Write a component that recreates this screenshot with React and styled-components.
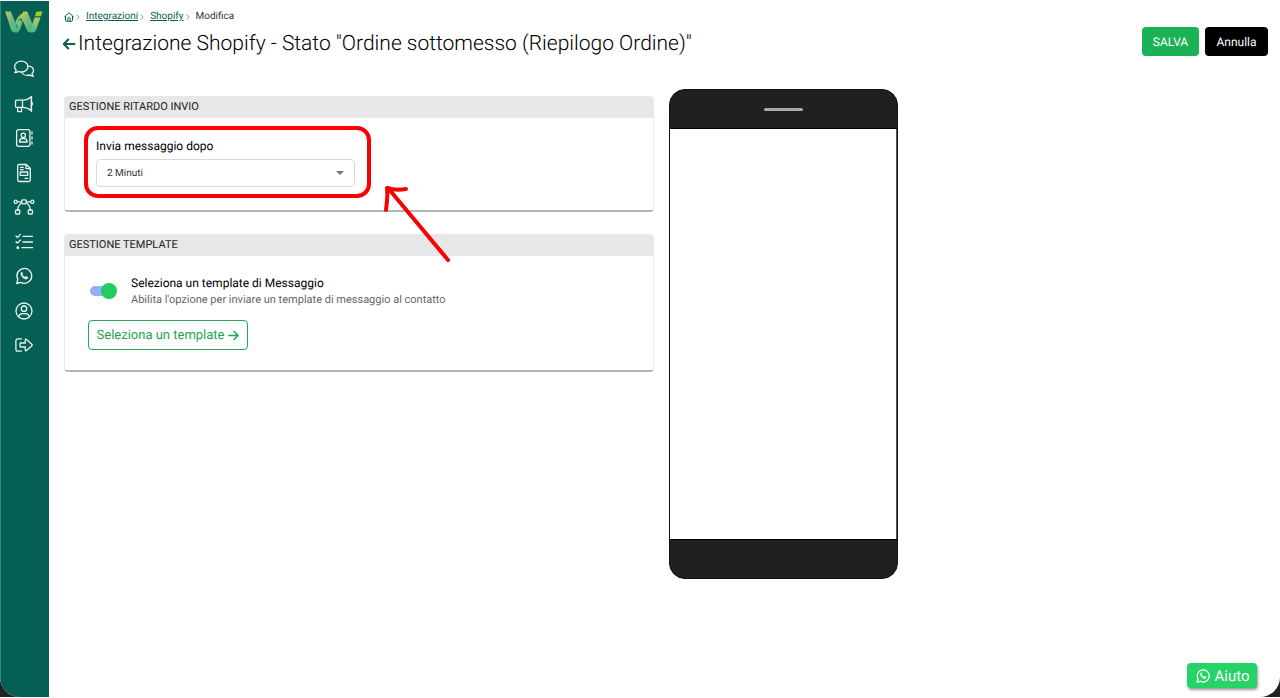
import React, { useState } from "react";
import styled, { createGlobalStyle } from "styled-components";

const GlobalStyle = createGlobalStyle`
  *, *::before, *::after { box-sizing: border-box; }
  body { margin: 0; background: #fff; font-family: Roboto, "Liberation Sans", sans-serif; font-size: 12px; color: #111; text-rendering: geometricPrecision; }
  button, select, input { font-family: inherit; margin: 0; text-rendering: inherit; }
  h1, h2, p, ol { margin: 0; padding: 0; font-weight: 400; }
`;

const Desktop = styled.div`
  padding: 1px 0;
  min-height: 100vh;
  display: flex;
`;
const Backdrop = styled.div`
  flex: 1;
  display: flex;
  background: #1f2423;
`;
const AppWindow = styled.div`
  flex: 1;
  display: flex;
  background: #fff;
  border-radius: 0 0 20px 20px;
  overflow: hidden;
`;
const Sidebar = styled.aside`
  flex: none;
  width: 49px;
  background: #065f53;
  box-shadow: inset 1px 0 #3d857b;
  display: flex;
  flex-direction: column;
  align-items: center;
  padding: 9px 1px 0 0;
`;
const LogoLink = styled.a`
  display: block;
  height: 26px;
`;
const Nav = styled.nav`
  margin-top: 22px;
  height: 298px;
  display: flex;
  flex-direction: column;
  justify-content: space-between;
`;
const NavLink = styled.a`
  display: block;
  height: 22px;
  color: #e9f4f1;
`;
const Main = styled.main`
  flex: 1;
  min-width: 0;
  padding: 9px 12px 9px 15px;
  display: flex;
  flex-direction: column;
`;
const Crumbs = styled.ol`
  display: flex;
  align-items: center;
  height: 14px;
  list-style: none;
  font-size: 10px;
  line-height: 14px;
`;
const Crumb = styled.li`
  display: flex;
  align-items: center;
  color: #333;
`;
const CrumbLink = styled.a`
  display: flex;
  color: #065f53;
  text-decoration: underline;
  text-underline-offset: 1px;
`;
const Separator = styled.svg`
  margin: 0 6px 0 2px;
`;
const Header = styled.header`
  display: flex;
  justify-content: space-between;
  align-items: flex-start;
  height: 34px;
  margin-top: 3px;
`;
const TitleGroup = styled.div`
  display: flex;
  align-items: center;
  gap: 2px;
  margin-left: -2px;
  height: 34px;
`;
const BackLink = styled.a`
  display: flex;
  color: #065f53;
`;
const Title = styled.h1`
  font-size: 21px;
  font-weight: 300;
  line-height: 30px;
  color: #000;
`;
const Actions = styled.div`
  display: flex;
  gap: 6px;
`;
const Button = styled.button`
  height: 29px;
  width: ${(p) => p.$width}px;
  border: 0;
  border-radius: 4px;
  background: ${(p) => p.$color};
  color: #fff;
  font-size: 12px;
  padding: 0;
`;
const Columns = styled.div`
  display: flex;
  align-items: flex-start;
  gap: 15px;
  margin-top: 28px;
  flex: 1;
`;
const Cards = styled.div`
  width: 49%;
  padding-top: 7px;
  display: flex;
  flex-direction: column;
  gap: 22px;
`;
const Card = styled.section`
  border-radius: 4px;
  background: #fff;
  border: 1px solid #e9e9e9;
  border-top: 0;
  border-bottom: 2px solid #b5b5b5;
`;
const CardTitle = styled.h2`
  background: #e7e7e7;
  border-radius: 4px 4px 0 0;
  padding: 0 4px;
  height: 22px;
  font-size: 11px;
  line-height: 22px;
  color: #222;
`;
const DelayBody = styled.div`
  padding: 19px 31px 23px;
`;
const Field = styled.div`
  position: relative;
  width: 259px;
  display: flex;
  flex-direction: column;
  gap: 4px;
`;
const FieldLabel = styled.label`
  font-size: 12px;
  line-height: 18px;
  color: #000;
`;
const SelectWrap = styled.div`
  display: grid;
  align-items: center;
  > * { grid-area: 1 / 1; }
`;
const Select = styled.select`
  appearance: none;
  width: 100%;
  height: 28px;
  border: 1px solid #d9d9d9;
  border-radius: 4px;
  background: #fff;
  padding: 0 10px;
  font-size: 10px;
  color: #333;
`;
const Caret = styled.svg`
  justify-self: end;
  margin-right: 11px;
  pointer-events: none;
`;
const Highlight = styled.div`
  position: absolute;
  left: -12px;
  top: -11px;
  width: 287px;
  height: 72px;
  border: 4px solid #f90004;
  border-radius: 14px;
  pointer-events: none;
`;
const Arrow = styled.svg`
  position: absolute;
  left: 286px;
  top: 46px;
  pointer-events: none;
`;
const TemplateBody = styled.div`
  padding: 18px 23px 20px;
`;
const SwitchRow = styled.div`
  display: flex;
  align-items: center;
  gap: 14px;
  padding-left: 1px;
`;
const Switch = styled.input.attrs({ type: "checkbox" })`
  appearance: none;
  width: 28px;
  height: 16px;
  display: grid;
  align-items: center;
  cursor: pointer;
  &::before {
    content: "";
    grid-area: 1 / 1;
    height: 10px;
    width: 26px;
    margin-left: 1px;
    border-radius: 5px;
    background: ${(p) => (p.checked ? "#93b0f8" : "#bbb")};
  }
  &::after {
    content: "";
    grid-area: 1 / 1;
    justify-self: ${(p) => (p.checked ? "end" : "start")};
    width: 16px;
    height: 16px;
    border-radius: 50%;
    background: ${(p) => (p.checked ? "#22cc60" : "#f4f4f4")};
  }
`;
const SwitchLabel = styled.label`
  font-size: 12px;
  line-height: 18px;
  color: #000;
`;
const Hint = styled.p`
  font-size: 11px;
  line-height: 16px;
  color: #666;
`;
const OutlineButton = styled.button`
  display: flex;
  align-items: center;
  justify-content: center;
  gap: 4px;
  margin-top: 12px;
  width: 160px;
  height: 30px;
  padding: 0;
  border: 1px solid #27a75b;
  border-radius: 4px;
  background: #fff;
  color: #1fa552;
  font-size: 13px;
`;
const Phone = styled.div`
  width: 229px;
  height: 490px;
  flex: none;
  display: flex;
  flex-direction: column;
  border: 1px solid #111;
  border-radius: 16px;
  background: #202020;
  overflow: hidden;
`;
const PhoneTop = styled.div`
  height: 39px;
  display: flex;
  align-items: center;
  justify-content: center;
  border-bottom: 1px solid #000;
`;
const Speaker = styled.span`
  width: 39px;
  height: 3px;
  border-radius: 2px;
  background: #aaa;
`;
const PhoneScreen = styled.div`
  flex: 1;
  background: #fff;
  border: solid #555;
  border-width: 0 1px 0 0;
`;
const PhoneBottom = styled.div`
  height: 39px;
  border-top: 1px solid #000;
`;
const HelpButton = styled.button`
  align-self: flex-end;
  margin-right: 11px;
  width: 70px;
  height: 25px;
  padding: 0;
  display: flex;
  align-items: center;
  justify-content: center;
  gap: 2px;
  border: 0;
  border-radius: 4px;
  background: #25d366;
  color: #fff;
  font-size: 15px;
  box-shadow: 1px 2px 3px rgba(0, 0, 0, 0.4);
`;

const Glyph = ({ size = 22, width = 1.3, children }) => (
  <svg width={size} height={size} viewBox="0 0 22 22" fill="none" stroke="currentColor"
    strokeWidth={width} strokeLinecap="round" strokeLinejoin="round" aria-hidden="true">
    {children}
  </svg>
);

const WhatsappShape = () => (
  <>
    <path d="M3.700 18.500l1.100-4.100A7.400 7.400 0 1 1 7.800 17.400z" />
    <path d="M8.500 7.300c-1.400 1-.7 3.100 1 4.900 1.800 1.800 4 2.600 5 1.200.5-.8.4-1.100.1-1.300l-1.600-.8c-.4-.1-.6.5-1 .9-1.300-.5-2.200-1.400-2.800-2.500.3-.4.7-.7.5-1.100l-.6-1.200c-.1-.2-.4-.2-.6-.1z" fill="currentColor" strokeWidth="0.5" />
  </>
);

const navItems = [
  { label: "Chat", icon: (
    <>
      <path d="M8.300 3.200c-3.700 0-6.700 2.400-6.700 5.400 0 1.400.6 2.600 1.600 3.500-.2 1-.7 1.800-1.400 2.600 1.400 0 2.600-.5 3.500-1.300 1 .4 2 .6 3 .6 3.700 0 6.700-2.400 6.700-5.400s-3-5.400-6.700-5.400z" />
      <path d="M15.300 8.100c3 .2 5.200 2 5.200 4.400 0 1.200-.6 2.300-1.500 3.100.2 1 .7 1.800 1.400 2.700-1.400 0-2.600-.5-3.600-1.300-3.300.9-6.700-.2-7.900-2.800" />
    </>
  ) },
  { label: "Campagne", icon: (
    <>
      <path d="M3.700 7.200H10c3.200 0 6-1.300 8.300-3.400v14c-2.300-2.100-5.100-3.400-8.300-3.400H3.700a1.200 1.200 0 0 1-1.200-1.200V8.400a1.200 1.200 0 0 1 1.200-1.200z" />
      <path d="M9.500 7.400v6.800M18.500 9.300c1.300.5 1.300 2.600 0 3.100M4.700 14.600v4h3.800v-4M18.500 3.300v15" />
    </>
  ) },
  { label: "Contatti", icon: (
    <>
      <rect x="3.600" y="2.700" width="13.300" height="16.600" rx="2" />
      <circle cx="10.300" cy="8.300" r="2.200" />
      <path d="M6.500 15c0-2.200 1-3.300 2.400-3.300h2.800c1.400 0 2.400 1.100 2.400 3.300zM19 5v2M19 10v2M19 15v2" />
    </>
  ) },
  { label: "Template", icon: (
    <>
      <path d="M5.900 2.500h7.400l4 4v11.300a1.700 1.700 0 0 1-1.700 1.700H6.400a1.700 1.700 0 0 1-1.700-1.700V3.700a1.200 1.200 0 0 1 1.200-1.200zM13 2.700v4h4" />
      <rect x="7.300" y="10" width="7.400" height="3.300" />
      <path d="M7.500 5.400h2.700M7.500 7.600h2.700M12 16.300h2.700" />
    </>
  ) },
  { label: "Automazioni", icon: (
    <>
      <rect x="8.700" y="3.800" width="4.600" height="4" rx="1" />
      <circle cx="2.700" cy="5.800" r="1.600" />
      <circle cx="19.300" cy="5.800" r="1.600" />
      <rect x="2.500" y="14" width="4.300" height="4" rx="1" />
      <rect x="15.200" y="14" width="4.300" height="4" rx="1" />
      <path d="M4.400 5.800h4.300M13.300 5.800h4.300M8.700 7C6.400 8.300 5 10.700 4.700 14M13.300 7c2.300 1.300 3.700 3.700 4 7" />
    </>
  ) },
  { label: "Attività", icon: (
    <>
      <path d="M3 5.100l1.500 1.400 3-3.100M3 10.700l1.500 1.400 3-3.100M10 5.300h9.500M10 11h9.500M9 16.700h10.500" />
      <circle cx="4.800" cy="16.700" r=".8" fill="currentColor" />
    </>
  ) },
  { label: "WhatsApp", icon: <WhatsappShape /> },
  { label: "Profilo", icon: (
    <>
      <circle cx="11" cy="11" r="8" />
      <circle cx="11" cy="8.700" r="2.700" />
      <path d="M5.700 16.700c.5-2 1.700-3.100 3.300-3.100.7 0 1.100.3 2 .3s1.300-.3 2-.3c1.600 0 2.800 1.100 3.300 3.100" />
    </>
  ) },
  { label: "Esci", icon: (
    <>
      <path d="M8.500 4.900H4.800A1.900 1.900 0 0 0 2.900 6.800v8.400a1.900 1.900 0 0 0 1.900 1.900h3.700" />
      <path d="M7.700 9h4.600V5.700c0-.5.5-.7.9-.4l5.900 5.300c.2.200.2.600 0 .8l-5.900 5.300c-.4.300-.9.100-.9-.4V13H7.700c-.4 0-.7-.3-.7-.7V9.700c0-.4.300-.7.700-.7z" />
    </>
  ) },
];

const Logo = () => (
  <svg width="38" height="26" viewBox="0 0 38 26" role="img" aria-label="W">
    <defs>
      <linearGradient id="leaf" x1="0" y1="0" x2="1" y2="1">
        <stop offset="0" stopColor="#c3ca5b" />
        <stop offset="0.500" stopColor="#70b77c" />
        <stop offset="1" stopColor="#3ab795" />
      </linearGradient>
      <linearGradient id="stem" x1="0" y1="0" x2="0" y2="1">
        <stop offset="0" stopColor="#c0ca58" />
        <stop offset="1" stopColor="#3cba94" />
      </linearGradient>
    </defs>
    <path d="M.2 1.500h5.600l5.600 13.500 1 7.500h-2C7.500 22.500 6.500 21 5.800 19z" fill="url(#leaf)" />
    <path d="M11.500 22.500l1-6.500-2.300-3c1.300-5 5-9 9.800-11l-2.200 9.500-2.700 7.500c-.8 2.300-1.800 3.500-3.600 3.500z" fill="url(#stem)" />
    <path d="M18 1.500h4.300l5.500 13-2.300 8c-2 0-3.200-1.200-4-3.500l-3.400-7.500z" fill="url(#leaf)" />
    <path d="M25 22.500l1.700-6.500 2.800-8.500h6l-4 11.500c-.9 2.400-2 3.500-4.200 3.500z" fill="url(#stem)" />
    <path d="M31.500 1.500h6l-1.700 4.800h-6z" fill="#a4ce21" />
    <path d="M13 10.500l3.200-1.700 1 3.700" fill="none" stroke="#0b6557" />
  </svg>
);

const Chevron = () => (
  <Separator width="4" height="8" viewBox="0 0 4 8" fill="none" stroke="#999" aria-hidden="true">
    <path d="M.7 1.500L3.200 4 .7 6.500" />
  </Separator>
);

export default function App() {
  const [delay, setDelay] = useState("2");
  const [enabled, setEnabled] = useState(true);
  return (
    <>
      <GlobalStyle />
      <Desktop>
        <Backdrop>
          <AppWindow>
            <Sidebar>
              <LogoLink href="#home" aria-label="Home"><Logo /></LogoLink>
              <Nav>
                {navItems.map((item) => (
                  <NavLink key={item.label} href="#menu" aria-label={item.label}>
                    <Glyph>{item.icon}</Glyph>
                  </NavLink>
                ))}
              </Nav>
            </Sidebar>
            <Main>
              <Crumbs>
                <Crumb>
                  <CrumbLink href="#home" aria-label="Home">
                    <svg width="10" height="10" viewBox="0 0 10 10" fill="none" stroke="currentColor" strokeLinejoin="round" aria-hidden="true">
                      <path d="M.4 4.900L5 .8l4.600 4.100M1.500 4v4.300c0 .6.4 1 1 1h5c.6 0 1-.4 1-1V4M3.800 9.200V6.400c0-.4.2-.6.600-.6h1.200c.4 0 .6.2.6.6v2.800" />
                    </svg>
                  </CrumbLink>
                  <Chevron />
                </Crumb>
                <Crumb><CrumbLink href="#integrazioni">Integrazioni</CrumbLink><Chevron /></Crumb>
                <Crumb><CrumbLink href="#shopify">Shopify</CrumbLink><Chevron /></Crumb>
                <Crumb aria-current="page">Modifica</Crumb>
              </Crumbs>
              <Header>
                <TitleGroup>
                  <BackLink href="#indietro" aria-label="Indietro">
                    <svg width="14" height="14" viewBox="0 0 14 14" fill="none" stroke="currentColor" strokeWidth="2" strokeLinecap="round" strokeLinejoin="round" aria-hidden="true">
                      <path d="M6.300 2.500L1.800 7l4.500 4.500M2 7h10.500" />
                    </svg>
                  </BackLink>
                  <Title>Integrazione Shopify - Stato "Ordine sottomesso (Riepilogo Ordine)"</Title>
                </TitleGroup>
                <Actions>
                  <Button type="button" $color="#1bb255" $width={57}>SALVA</Button>
                  <Button type="button" $color="#000" $width={63}>Annulla</Button>
                </Actions>
              </Header>
              <Columns>
                <Cards>
                  <Card>
                    <CardTitle>GESTIONE RITARDO INVIO</CardTitle>
                    <DelayBody>
                      <Field>
                        <FieldLabel htmlFor="delay">Invia messaggio dopo</FieldLabel>
                        <SelectWrap>
                          <Select id="delay" value={delay} onChange={(e) => setDelay(e.target.value)}>
                            <option value="2">2 Minuti</option>
                          </Select>
                          <Caret width="8" height="4" viewBox="0 0 8 4" aria-hidden="true">
                            <path d="M0 0h8L4 4z" fill="#777" />
                          </Caret>
                        </SelectWrap>
                        <Highlight />
                        <Arrow width="70" height="82" viewBox="0 0 70 82" fill="none" stroke="#f90004" strokeLinecap="round" strokeLinejoin="round" aria-hidden="true">
                          <path d="M6 5l60 72" strokeWidth="4" />
                          <path d="M4 27C5 19 6 12 5 5c6 2 13 2 19 1" strokeWidth="4" />
                        </Arrow>
                      </Field>
                    </DelayBody>
                  </Card>
                  <Card>
                    <CardTitle>GESTIONE TEMPLATE</CardTitle>
                    <TemplateBody>
                      <SwitchRow>
                        <Switch id="template" checked={enabled} onChange={(e) => setEnabled(e.target.checked)} />
                        <div>
                          <SwitchLabel htmlFor="template">Seleziona un template di Messaggio</SwitchLabel>
                          <Hint>Abilita l'opzione per inviare un template di messaggio al contatto</Hint>
                        </div>
                      </SwitchRow>
                      <OutlineButton type="button">
                        Seleziona un template
                        <svg width="11" height="12" viewBox="0 0 11 12" fill="none" stroke="currentColor" strokeWidth="1.500" strokeLinecap="round" strokeLinejoin="round" aria-hidden="true">
                          <path d="M1 6.500h9M6 2.500l4 4-4 4" />
                        </svg>
                      </OutlineButton>
                    </TemplateBody>
                  </Card>
                </Cards>
                <Phone aria-label="Anteprima">
                  <PhoneTop><Speaker /></PhoneTop>
                  <PhoneScreen />
                  <PhoneBottom />
                </Phone>
              </Columns>
              <HelpButton type="button">
                <Glyph size={18} width={1.6}><WhatsappShape /></Glyph>
                Aiuto
              </HelpButton>
            </Main>
          </AppWindow>
        </Backdrop>
      </Desktop>
    </>
  );
}
